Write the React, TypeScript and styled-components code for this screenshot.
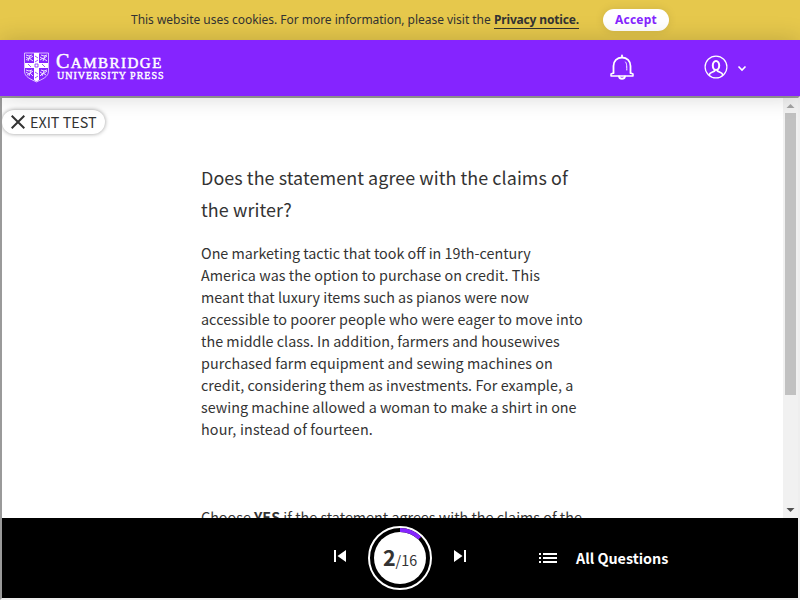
import React from "react";
import styled, { createGlobalStyle } from "styled-components";

const Global = createGlobalStyle`
  *{box-sizing:border-box}
  body{margin:0;background:#fff;overflow:hidden}
`;
const source = `"Noto Sans CJK SC", "Noto Sans", sans-serif`;

const Page = styled.div`
  width:800px;height:600px;display:flex;flex-direction:column;overflow:hidden;
  font-family:${source};color:#333;
`;
const CookieBar = styled.div`
  height:40px;flex:none;background:#e6c84c;display:flex;align-items:center;
  padding:0 0 0 131px;font-family:"Noto Sans","Open Sans",sans-serif;font-size:12px;color:#333;
`;
const CookieText = styled.span`
  width:363px;white-space:nowrap;letter-spacing:-0.03px;line-height:18px;
`;
const PrivacyLink = styled.a`
  width:85px;height:17px;line-height:16px;margin-top:1px;font-weight:700;letter-spacing:-0.17px;white-space:nowrap;
  border-bottom:1px solid #333;
`;
const Accept = styled.button`
  margin-left:24px;width:66px;height:22px;border:0;border-radius:11px;background:#fff;padding:0;
  color:#8524ff;font:700 12px/20px "Noto Sans",sans-serif;letter-spacing:.2px;box-shadow:0 0 10px rgba(0,0,0,.1);
`;
const Header = styled.header`
  height:56px;flex:none;background:#8524ff;display:flex;align-items:center;padding-left:24px;
  position:relative;z-index:2;box-shadow:0 0 24px rgba(0,0,0,.18);color:#fff;
`;
const Brand = styled.div`
  width:141px;height:32px;display:flex;gap:7px;
`;
const BrandName = styled.div`
  font-family:"Liberation Serif",serif;display:flex;flex-direction:column;white-space:nowrap;
`;
const BrandTop = styled.div`
  font-size:15px;line-height:18px;height:18px;letter-spacing:1.5px;-webkit-text-stroke:.5px #fff;
  &::first-letter{font-size:20px}
`;
const BrandBottom = styled.div`
  font-size:10px;line-height:11px;height:11px;margin-left:1px;letter-spacing:1px;-webkit-text-stroke:.4px #fff;
`;
const Bell = styled.svg`margin:-2px 0 0 444px;width:26px;height:26px;`;
const Avatar = styled.svg`margin:-2px 0 0 69px;width:24px;height:24px;`;
const Chevron = styled.svg`margin:-1px 0 0 9px;width:10px;height:8px;`;

const Frame = styled.main`
  height:504px;flex:none;border:2px solid;border-color:#9a9a9a #eee #eee #9a9a9a;display:flex;flex-direction:column;
`;
const Viewport = styled.div`height:420px;display:flex;overflow:hidden;`;
const Content = styled.div`width:781px;height:420px;overflow:hidden;padding-top:12px;`;
const Exit = styled.button`
  display:flex;align-items:center;width:103px;height:24px;border:0;border-radius:12px;background:#fff;padding:0 0 0 9px;
  gap:5px;box-shadow:0 0 4px rgba(0,0,0,.4);color:#333;font:400 14.33px/24px ${source};white-space:nowrap;
`;
const Question = styled.section`margin:27px 0 0 199px;width:400px;`;
const Line = styled.span<{ $track?: number }>`
  display:block;white-space:nowrap;letter-spacing:${p => p.$track ?? 0}px;font-variant-ligatures:common-ligatures;
`;
const Title = styled.h1`margin:0;font-size:17.91px;font-weight:400;line-height:32px;`;
const Passage = styled.p`margin:17px 0 0;font-size:14.33px;line-height:22px;`;
const Instruction = styled(Passage)`margin-top:66px;`;

const Scrollbar = styled.div`
  width:15px;height:420px;background:#f1f1f1;display:flex;flex-direction:column;align-items:center;
`;
const Arrow = styled.svg`width:15px;height:15px;flex:none;`;
const Thumb = styled.div`width:11px;height:282px;background:#c1c1c1;margin-bottom:108px;`;

const Footer = styled.nav`
  height:80px;background:#000;display:flex;align-items:center;color:#fff;padding-left:331px;
`;
const Step = styled.svg`width:14px;height:12px;margin-top:-4px;`;
const Progress = styled.div`
  width:64px;height:64px;margin:0 21px 0 21px;display:grid;place-items:center;
  & > *{grid-area:1/1}
`;
const Count = styled.div`
  color:#333;font-size:14.33px;line-height:30px;height:32px;display:flex;align-items:baseline;white-space:nowrap;
  b{font-size:21.5px;font-weight:700}
`;
const ListIcon = styled.svg`width:18px;height:10px;margin-left:72px;`;
const AllQuestions = styled.span`margin-left:19px;font-size:14.33px;font-weight:700;line-height:22px;white-space:nowrap;`;

const passage: [string, number][] = [
  ["One marketing tactic that took off in 19th-century", 0],
  ["America was the option to purchase on credit. This", .05],
  ["meant that luxury items such as pianos were now", 0],
  ["accessible to poorer people who were eager to move into", .055],
  ["the middle class. In addition, farmers and housewives", .03],
  ["purchased farm equipment and sewing machines on", .05],
  ["credit, considering them as investments. For example, a", .035],
  ["sewing machine allowed a woman to make a shirt in one", 0],
  ["hour, instead of fourteen.", .16],
];

const Crest = () => (
  <svg width="25" height="31" viewBox="0 0 25 31" fill="none" stroke="#fff">
    <path d="M.5 1h24v18c0 6-6 8-12 11C6.500 27 .5 25 .5 19Z" strokeWidth=".8" opacity=".85" />
    <path d="M10 1h5v10h9v5h-9v12l-2.500 1.500L10 28V16H1v-5h9Z" fill="#fff" stroke="none" />
    <g strokeWidth="1" opacity=".85">
      <path d="M2 3l3 1 3-1M2 5l3 2 4-3M2 8l3-2 4 3M4 9l2-5M17 3l3 1 3-1M16 5l3 2 4-3M16 8l3-2 4 3M19 9l2-5" />
      <path d="M2 18l3 1 3-1M2 20l3 2 4-3M3 23l3-2 3 3M5 24l2-5M17 18l3 1 3-1M16 20l3 2 4-3M16 24l3-3 3 2M18 24l2-5" />
    </g>
    <path d="M11 4l3 2M14 8l-3 2M4 12l3 3M18 12l3 3M11 20l3 2M14 24l-3 2M11 12h3v3h-3Z" stroke="#8524ff" strokeWidth=".8" />
  </svg>
);

export default function App() {
  return (
    <Page>
      <Global />
      <CookieBar>
        <CookieText>This website uses cookies. For more information, please visit the</CookieText>
        <PrivacyLink>Privacy notice.</PrivacyLink>
        <Accept>Accept</Accept>
      </CookieBar>
      <Header>
        <Brand>
          <Crest />
          <BrandName>
            <BrandTop>CAMBRIDGE</BrandTop>
            <BrandBottom>UNIVERSITY PRESS</BrandBottom>
          </BrandName>
        </Brand>
        <Bell viewBox="0 0 26 26" fill="none" stroke="#fff" strokeLinecap="round" strokeLinejoin="round">
          <path d="M13 1.500v2M4.500 19v-7C4.500 7 8 3.500 13 3.500s8.500 3.500 8.500 8.500v7" strokeWidth="1.800" />
          <path d="M4.500 19 2 20v2h22v-2l-2.500-1" strokeWidth="1.500" />
          <path d="M10 22.500c.5 3 5.500 3 6 0" strokeWidth="1.800" />
          <path d="M16.500 8c1.200 1.500 1.300 3 1.300 8" strokeWidth="1" />
        </Bell>
        <Avatar viewBox="0 0 24 24" fill="none" stroke="#fff">
          <circle cx="12" cy="12" r="10.900" strokeWidth="1.200" />
          <ellipse cx="12" cy="10.500" rx="3.200" ry="4.500" strokeWidth="2" />
          <path d="M10.500 14.500v1.500c-1.500 1.300-4.500 1-5.500 4M13.500 14.500v1.500c1.500 1.300 4.500 1 5.500 4" strokeWidth="1.800" />
        </Avatar>
        <Chevron viewBox="0 0 10 8" fill="none" stroke="#fff" strokeWidth="1.600">
          <path d="M1.500 2.500 5 6l3.500-3.500" />
        </Chevron>
      </Header>
      <Frame>
        <Viewport>
          <Content>
            <Exit>
              <svg width="14" height="14" viewBox="0 0 14 14" stroke="#333" strokeWidth="2">
                <path d="M.7.7l12.600 12.600M13.300.7.7 13.300" />
              </svg>
              EXIT TEST
            </Exit>
            <Question>
              <Title>
                <Line $track={0.07}>Does the statement agree with the claims of</Line>
                <Line $track={0.1}>the writer?</Line>
              </Title>
              <Passage>
                {passage.map(([text, track]) => <Line key={text} $track={track}>{text}</Line>)}
              </Passage>
              <Instruction>
                <Line>Choose <b>YES</b> if the statement agrees with the claims of the</Line>
              </Instruction>
            </Question>
          </Content>
          <Scrollbar>
            <Arrow viewBox="0 0 15 15" fill="#a3a3a3"><path d="M7.500 6 11.500 10h-8Z" /></Arrow>
            <Thumb />
            <Arrow viewBox="0 0 15 15" fill="#505050"><path d="M3.500 5h8l-4 4Z" /></Arrow>
          </Scrollbar>
        </Viewport>
        <Footer>
          <Step viewBox="0 0 14 12" fill="#fff"><path d="M1 0h2v12H1ZM13 0v12L4.500 6Z" /></Step>
          <Progress>
            <svg width="64" height="64" viewBox="0 0 64 64" fill="none">
              <circle cx="32" cy="32" r="31" stroke="#fff" strokeWidth="2" />
              <circle cx="32" cy="32" r="26" fill="#fff" />
              <path d="M32 4A28 28 0 0 1 51.800 12.200" stroke="#8524ff" strokeWidth="4" />
            </svg>
            <Count><b>2</b>/16</Count>
          </Progress>
          <Step viewBox="0 0 14 12" fill="#fff"><path d="M1 0l8.500 6L1 12ZM11 0h2v12h-2Z" /></Step>
          <ListIcon viewBox="0 0 18 10" fill="#fff">
            <path d="M0 0h2v2H0ZM4 0h14v2H4ZM0 4h2v2H0ZM4 4h14v2H4ZM0 8h2v2H0ZM4 8h14v2H4Z" />
          </ListIcon>
          <AllQuestions>All Questions</AllQuestions>
        </Footer>
      </Frame>
    </Page>
  );
}
